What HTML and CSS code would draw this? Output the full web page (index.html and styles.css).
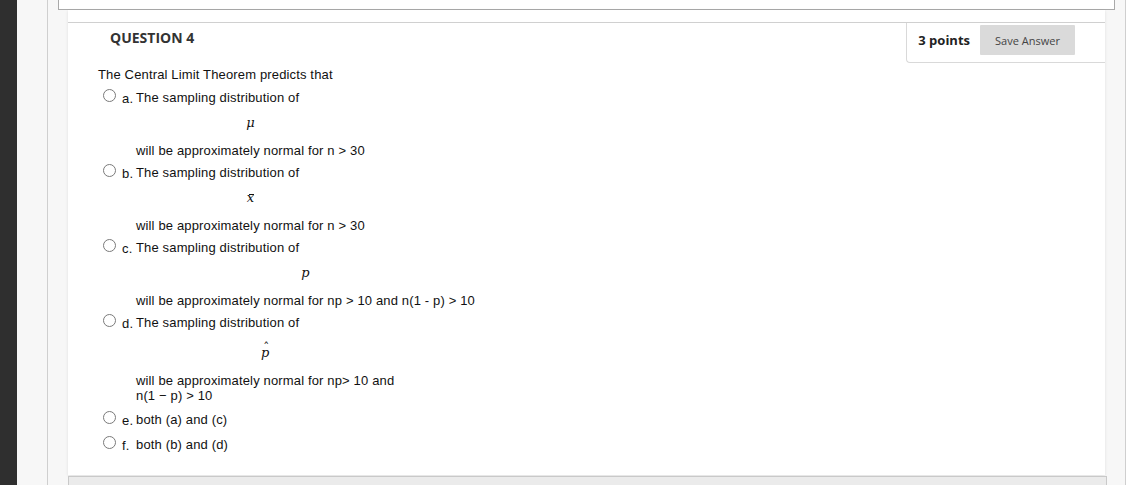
FILE: index.html
```html
<!DOCTYPE html>
<html lang="en">
<head>
<meta charset="utf-8">
<title>Question 4</title>
<link rel="stylesheet" href="styles.css">
</head>
<body>
<div class="app">
  <div class="rail"></div>
  <div class="gutter"></div>
  <div class="main">
    <div class="prev-box"></div>
    <div class="panel">
      <div class="question">
        <div class="q-head">
          <h3 class="q-title">QUESTION 4</h3>
          <div class="q-points">
            <span class="points">3 points</span>
            <button class="save" type="button">Save Answer</button>
          </div>
        </div>
        <div class="q-body">
          <p class="prompt">The Central Limit Theorem predicts that</p>
          <ul class="options">
            <li class="option">
              <span class="radio"></span><span class="letter">a.</span>
              <div class="answer">
                <div class="line">The sampling distribution of</div>
                <div class="math">μ</div>
                <div class="line">will be approximately normal for n &gt; 30</div>
              </div>
            </li>
            <li class="option">
              <span class="radio"></span><span class="letter">b.</span>
              <div class="answer">
                <div class="line">The sampling distribution of</div>
                <div class="math"><span class="bar">x</span></div>
                <div class="line">will be approximately normal for n &gt; 30</div>
              </div>
            </li>
            <li class="option">
              <span class="radio"></span><span class="letter">c.</span>
              <div class="answer">
                <div class="line">The sampling distribution of</div>
                <div class="math">p</div>
                <div class="line">will be approximately normal for np &gt; 10 and n(1 - p) &gt; 10</div>
              </div>
            </li>
            <li class="option">
              <span class="radio"></span><span class="letter">d.</span>
              <div class="answer">
                <div class="line">The sampling distribution of</div>
                <div class="math math-tall"><span class="hat">p</span></div>
                <div class="line">will be approximately normal for np&gt; 10 and<br>n(1 − p) &gt; 10</div>
              </div>
            </li>
            <li class="option option-short">
              <span class="radio"></span><span class="letter">e.</span>
              <div class="answer">
                <div class="line">both (a) and (c)</div>
              </div>
            </li>
            <li class="option option-short">
              <span class="radio"></span><span class="letter">f.</span>
              <div class="answer">
                <div class="line">both (b) and (d)</div>
              </div>
            </li>
          </ul>
        </div>
      </div>
    </div>
    <div class="next-box"></div>
  </div>
  <div class="edge"></div>
</div>
</body>
</html>
```
FILE: styles.css
```css
* { box-sizing: border-box; }

html, body {
  margin: 0;
  padding: 0;
  background: #ffffff;
}

.app {
  display: flex;
  height: 485px;
  overflow: hidden;
}

.rail {
  width: 17px;
  flex: none;
  background: #2f2f2f;
}

.gutter {
  width: 31px;
  flex: none;
  background: #f7f7f7;
  border-right: 1px solid #cfcfcf;
}

.main {
  flex: 1;
  min-width: 0;
  display: flex;
  flex-direction: column;
  background: #f7f7f7;
}

.edge {
  width: 5px;
  flex: none;
  background: #ffffff;
  border-left: 1px solid #cfcfcf;
}

.prev-box {
  flex: none;
  margin: 0 10px;
  height: 10px;
  background: #ffffff;
  border: 1px solid #a9a9a9;
  border-top: none;
}

.panel {
  flex: none;
  margin: 0 20px;
  height: 465px;
  padding-top: 12px;
  background: #ffffff;
  box-shadow: 0 1px 3px rgba(0, 0, 0, 0.10);
}

.next-box {
  flex: none;
  height: 20px;
  margin: 1px 18px 0 20px;
  background: #ebebeb;
  border: 1px solid #c9c9c9;
  border-bottom: none;
}

.question {
  border-top: 1px solid #d0d0d0;
}

.q-head {
  display: flex;
  align-items: flex-start;
  justify-content: space-between;
}

.q-title {
  margin: 5px 0 0 42px;
  font-family: "Open Sans", "Liberation Sans", sans-serif;
  font-weight: 700;
  font-size: 14px;
  line-height: 20px;
  color: #333333;
}

.q-points {
  display: flex;
  align-items: flex-start;
  gap: 10px;
  height: 40px;
  padding: 2px 30px 0 11px;
  border-left: 1px solid #d9d9d9;
  border-bottom: 1px solid #d9d9d9;
  border-bottom-left-radius: 4px;
}

.points {
  margin-top: 5px;
  font-family: "Open Sans", "Liberation Sans", sans-serif;
  font-weight: 700;
  font-size: 13px;
  line-height: 20px;
  color: #222222;
}

.save {
  width: 95px;
  height: 30px;
  padding: 0;
  border: none;
  border-radius: 1px;
  background: #dadada;
  font-family: "Open Sans", "Liberation Sans", sans-serif;
  font-size: 11px;
  color: #444444;
}

.q-body {
  padding: 4px 0 0 30px;
  font-family: "Liberation Sans", Arial, sans-serif;
  font-size: 13px;
  line-height: 15px;
  letter-spacing: 0.15px;
  color: #111111;
}

.prompt {
  margin: 0;
}

.options {
  list-style: none;
  margin: 0;
  padding: 0 0 0 5px;
}

.option {
  display: flex;
  align-items: flex-start;
  margin-top: 8px;
}

.option + .option {
  margin-top: 7px;
}

.option-short,
.option + .option-short {
  margin-top: 9px;
}

.radio {
  flex: none;
  width: 13px;
  height: 13px;
  margin: -1px 6px 0 0;
  border: 1px solid #7a7a7a;
  border-radius: 50%;
  background: #ffffff;
}

.letter {
  flex: none;
  width: 14px;
  padding-top: 1px;
}

.answer {
  flex: none;
}

.math {
  height: 22px;
  margin: 8px 0;
  text-align: center;
  font-family: "DejaVu Serif", "Liberation Serif", serif;
  font-style: italic;
  font-size: 13px;
  line-height: 20px;
  letter-spacing: 0;
  color: #111111;
}

.math-tall {
  height: 27px;
  line-height: 30px;
}

.bar,
.hat {
  position: relative;
  display: inline-block;
}

.bar::before {
  content: "";
  position: absolute;
  left: 2px;
  right: 0;
  top: 6px;
  height: 1px;
  background: #111111;
}

.hat::before {
  content: "\02C6";
  position: absolute;
  left: 2px;
  right: 0;
  top: -5px;
  text-align: center;
  font-style: normal;
  font-size: 12px;
}
```
